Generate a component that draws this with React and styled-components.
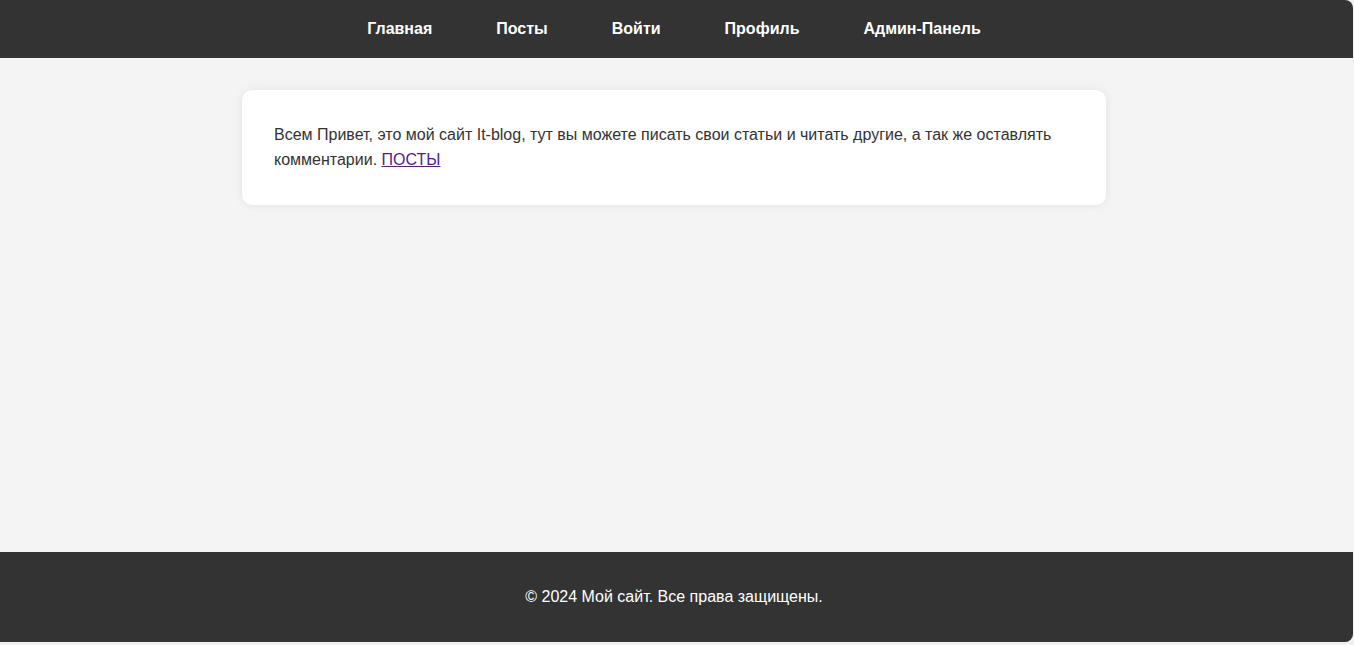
import React from "react";
import styled, { createGlobalStyle } from "styled-components";

const GlobalStyle = createGlobalStyle`
  html, body {
    margin: 0;
    padding: 0;
    background-color: #f0f0f0;
  }
  body {
    font-family: "Liberation Sans", Arial, sans-serif;
  }
`;

const Frame = styled.div`
  width: 1353px;
  height: 642px;
  display: flex;
  flex-direction: column;
  background-color: #f4f4f4;
  border-radius: 0 8px 8px 0;
  overflow: hidden;
`;

const Header = styled.header`
  background-color: #333;
  padding: 0 5px 0 0;
`;

const Nav = styled.ul`
  list-style: none;
  margin: 0;
  padding: 20px 0;
  display: flex;
  justify-content: center;
  gap: 64px;
`;

const NavLink = styled.a`
  color: #fff;
  font-size: 16px;
  font-weight: bold;
  line-height: 18px;
  text-decoration: none;
  cursor: pointer;
`;

const Main = styled.main`
  flex: 1;
  padding: 32px 5px 0 0;
`;

const Card = styled.section`
  width: 800px;
  margin: 0 auto;
  padding: 32px 32px 33px;
  background-color: #fff;
  border-radius: 10px;
  box-shadow: 0 0 10px rgba(0, 0, 0, 0.08);
`;

const Text = styled.p`
  margin: 0;
  color: #333;
  font-size: 16px;
  line-height: 25px;
`;

const PostsLink = styled.a`
  color: #551a8b;
  text-decoration: underline;
`;

const Footer = styled.footer`
  background-color: #333;
  color: #fff;
  text-align: center;
  padding: 36px 5px 36px 0;
`;

const FooterText = styled.p`
  margin: 0;
  font-size: 16px;
  line-height: 18px;
`;

const links = ["Главная", "Посты", "Войти", "Профиль", "Админ-Панель"];

const App = () => {
  return (
    <>
      <GlobalStyle />
      <Frame>
        <Header>
          <Nav>
            {links.map((l) => (
              <li key={l}>
                <NavLink href="#">{l}</NavLink>
              </li>
            ))}
          </Nav>
        </Header>
        <Main>
          <Card>
            <Text>
              Всем Привет, это мой сайт It-blog, тут вы можете писать свои
              статьи и читать другие, а так же оставлять комментарии.{" "}
              <PostsLink href="#">ПОСТЫ</PostsLink>
            </Text>
          </Card>
        </Main>
        <Footer>
          <FooterText>© 2024 Мой сайт. Все права защищены.</FooterText>
        </Footer>
      </Frame>
    </>
  );
};

export default App;
